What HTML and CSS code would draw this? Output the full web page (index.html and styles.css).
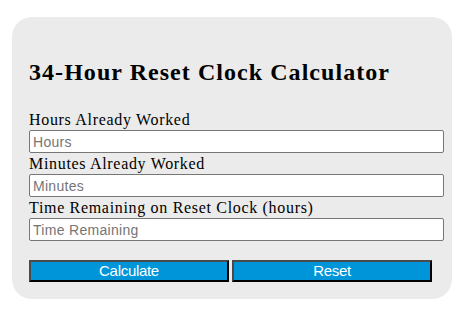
FILE: index.html
```html
<!DOCTYPE html>
<html lang="en">
<head>
    <meta charset="UTF-8">
    <meta name="viewport" content="width=device-width, initial-scale=1.0">
    <title>34-Hour Reset Clock Calculator</title>
    <link rel="stylesheet" href="styles.css">
</head>
<body>

<div class="calculator">
    <h2>34-Hour Reset Clock Calculator</h2>
    <form id="reset-form">
        <div class="field">
            <label for="hours">Hours Already Worked</label>
            <input type="number" id="hours" placeholder="Hours">
        </div>
        <div class="field">
            <label for="minutes">Minutes Already Worked</label>
            <input type="number" id="minutes" placeholder="Minutes">
        </div>
        <div class="field">
            <label for="remaining">Time Remaining on Reset Clock (hours)</label>
            <input type="text" id="remaining" placeholder="Time Remaining" readonly>
        </div>
        <div class="actions">
            <button type="button" id="calc">Calculate</button>
            <button type="reset">Reset</button>
        </div>
    </form>
</div>

<script>
    // 34時間リセットの残り時間を計算
    document.getElementById('calc').addEventListener('click', function () {
        const h = parseFloat(document.getElementById('hours').value) || 0;
        const m = parseFloat(document.getElementById('minutes').value) || 0;
        const left = Math.max(0, 34 - (h + m / 60));
        document.getElementById('remaining').value = left.toFixed(2);
    });
</script>

</body>
</html>
```

FILE: styles.css
```css
:root {
    --card-bg: #eaebea;
    --button-bg: #0095d9;
    --input-border: #767676;
}

body {
    margin: 0;
    padding: 17px 12px;
    font-family: "Liberation Serif", "Times New Roman", serif;
    color: #000;
    background: #fff;
}

.calculator {
    width: 440px;
    box-sizing: border-box;
    padding: 20px 8px 17px 17px;
    background: var(--card-bg);
    border-radius: 20px;
}

h2 {
    margin: 21px 0 23px;
    font-size: 24px;
    line-height: 28px;
    font-weight: bold;
    letter-spacing: 1.05px;
}

.field label {
    display: block;
    font-size: 16px;
    line-height: 21px;
    letter-spacing: 0.68px;
}

.field input {
    display: block;
    width: 100%;
    height: 23px;
    box-sizing: border-box;
    margin: 0;
    padding: 1px 3px;
    border: 1px solid var(--input-border);
    border-radius: 2px;
    background: #fff;
    font-family: "Liberation Sans", Arial, sans-serif;
    font-size: 14px;
    letter-spacing: 0.3px;
}

.field input::placeholder {
    color: #757575;
}

.field input::-webkit-outer-spin-button,
.field input::-webkit-inner-spin-button {
    -webkit-appearance: none;
    margin: 0;
}

.actions {
    display: flex;
    gap: 3px;
    margin-top: 19px;
}

.actions button {
    width: 200px;
    height: 22px;
    box-sizing: border-box;
    padding: 0;
    background: var(--button-bg);
    color: #fff;
    border: 2px solid;
    border-color: #4a4a4a #000 #000 #4a4a4a;
    font-family: "Liberation Sans", Arial, sans-serif;
    font-size: 15px;
    line-height: 18px;
    letter-spacing: -0.3px;
    cursor: pointer;
}
```
